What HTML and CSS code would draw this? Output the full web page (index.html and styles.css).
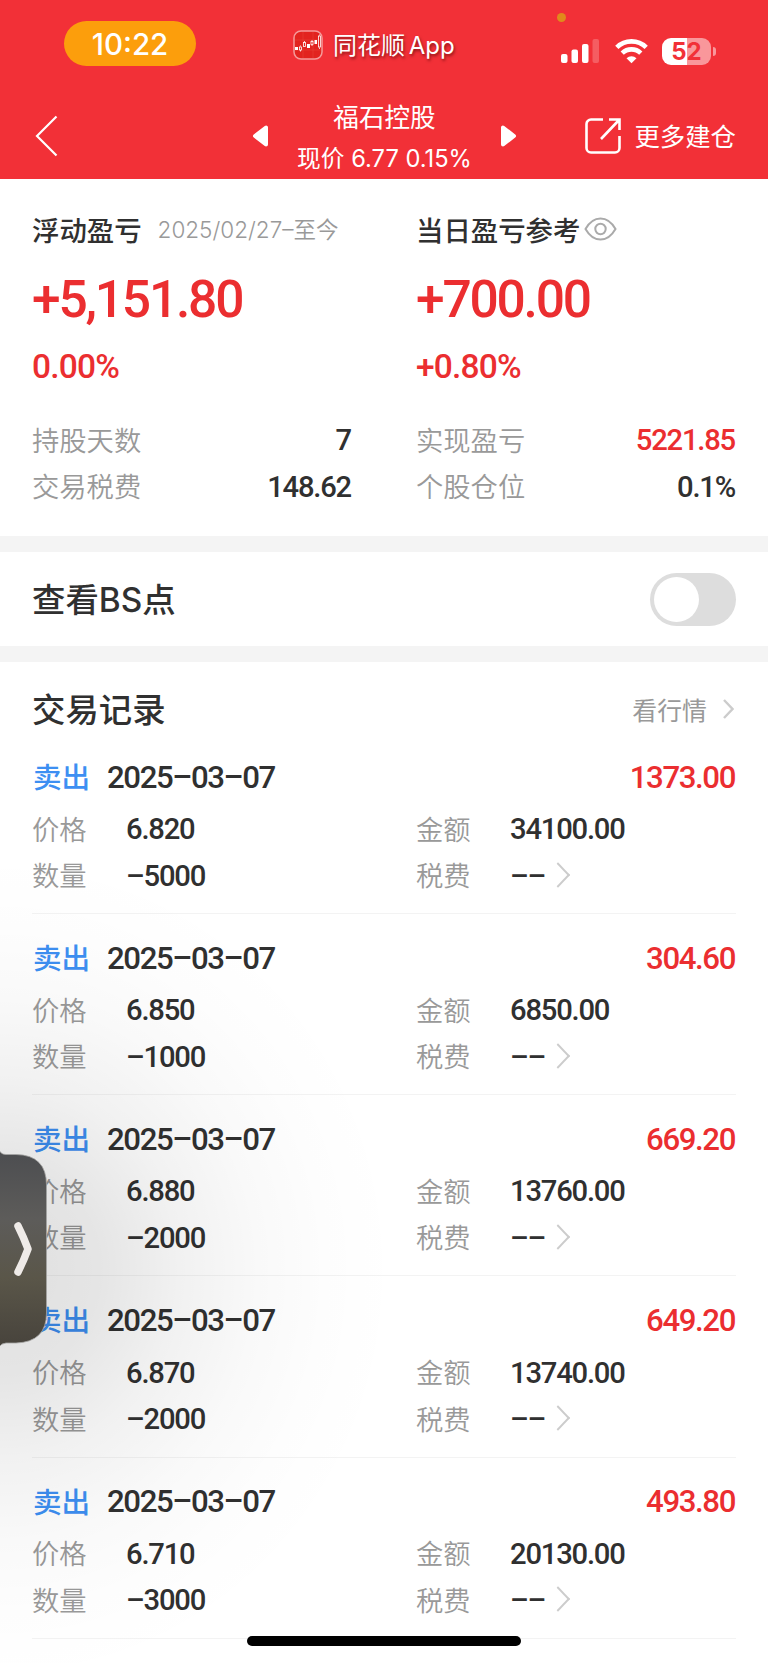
FILE: index.html
```
<!DOCTYPE html>
<html lang="zh-CN">
<head>
    <meta charset="UTF-8">
    <title>福石控股</title>
    <link rel="stylesheet" href="styles.css">
</head>
<body>
    <header class="header">
        <div class="status-bar">
            <span class="time">10:22</span>
            <div class="app-name">
                <svg class="app-icon" width="30" height="30" viewBox="0 0 30 30">
                    <rect x="1" y="1" width="28" height="28" rx="7" fill="#e2231f" stroke="#f59a9a" stroke-width="1.5"/>
                    <path d="M2 10h26M2 20h26M10 2v26M20 2v26" stroke="#ea4038" stroke-width=".6"/>
                    <g stroke="#fff" stroke-width=".8" fill="none">
                        <path d="M7.500 15.500v1M7.500 20v1.500M11.500 11v1.500M19 10v1.500M19 15v1M26.500 4.500v1M26.500 17.500v1.500"/>
                        <rect x="6.500" y="17" width="2" height="3"/>
                        <rect x="10.500" y="12.500" width="2" height="4"/>
                        <rect x="18" y="11.500" width="2" height="3"/>
                        <rect x="25.500" y="6" width="2" height="11"/>
                    </g>
                    <path d="M2 17h3v3H2zM14 14h3v4h-3zM21.500 10h2.500v4h-2.500z" fill="#fff"/>
                </svg>
                <span>同花顺 App</span>
            </div>
            <div class="indicators">
                <svg width="38" height="26" viewBox="0 0 38 26" fill="#fff">
                    <rect x="0" y="16" width="6.500" height="9" rx="2"/>
                    <rect x="10.500" y="11.500" width="6.500" height="13.500" rx="2"/>
                    <rect x="21" y="6" width="6.500" height="19" rx="2"/>
                    <rect x="31.500" y="1" width="6.500" height="24" rx="2" opacity=".22"/>
                </svg>
                <svg class="wifi" width="33" height="26" viewBox="0 0 33 26" fill="none" stroke="#fff" stroke-width="4.600">
                    <path d="M1.800 9.400a21 21 0 0 1 29.400 0"/>
                    <path d="M7.200 15.200a13.300 13.300 0 0 1 18.600 0"/>
                    <path d="M16.500 25.200l-5-5a7.200 7.200 0 0 1 10 0z" fill="#fff" stroke="none"/>
                </svg>
                <div class="battery"><span>52</span></div>
            </div>
            <i class="mic-dot"></i>
        </div>
        <nav class="nav-bar">
            <svg class="back" width="24" height="42" viewBox="0 0 24 42" fill="none" stroke="#fff" stroke-width="2.200">
                <path d="M21.500 1.500L2 21l19.500 19.500"/>
            </svg>
            <div class="stock">
                <svg width="17" height="24" viewBox="0 0 17 24" fill="#fff" stroke="#fff" stroke-width="4" stroke-linejoin="round">
                    <path d="M14 3.500v17L3 12z"/>
                </svg>
                <div class="stock-info">
                    <div class="stock-name">福石控股</div>
                    <div class="stock-price">现价 6.77 0.15%</div>
                </div>
                <svg width="17" height="24" viewBox="0 0 17 24" fill="#fff" stroke="#fff" stroke-width="4" stroke-linejoin="round">
                    <path d="M3 3.500v17L14 12z"/>
                </svg>
            </div>
            <a class="more">
                <svg width="38" height="38" viewBox="0 0 38 38" fill="none" stroke="#fff" stroke-width="2.600">
                    <path d="M19 2.500H7a4.500 4.500 0 0 0-4.500 4.500v24a4.500 4.500 0 0 0 4.500 4.500h24a4.500 4.500 0 0 0 4.500-4.500V19"/>
                    <path d="M25 2.500h10.500V13M35 3L17 22"/>
                </svg>
                <span>更多建仓</span>
            </a>
        </nav>
    </header>

    <section class="summary">
        <div class="summary-col">
            <div class="summary-title">浮动盈亏 <small>2025/02/27–至今</small></div>
            <div class="amount">+5,151.80</div>
            <div class="percent">0.00%</div>
            <div class="stat"><span>持股天数</span><b>7</b></div>
            <div class="stat"><span>交易税费</span><b>148.62</b></div>
        </div>
        <div class="summary-col">
            <div class="summary-title">当日盈亏参考
                <svg width="33" height="24" viewBox="0 0 33 24" fill="none" stroke="#aaa" stroke-width="2">
                    <path d="M1.500 12C5.500 5 10.500 1.500 16.500 1.500S27.500 5 31.500 12C27.500 19 22.500 22.500 16.500 22.500S5.500 19 1.500 12z"/>
                    <circle cx="16.500" cy="12" r="5.200"/>
                </svg>
            </div>
            <div class="amount">+700.00</div>
            <div class="percent">+0.80%</div>
            <div class="stat"><span>实现盈亏</span><b class="red">5221.85</b></div>
            <div class="stat"><span>个股仓位</span><b>0.1%</b></div>
        </div>
    </section>

    <section class="bs-row">
        <h2>查看BS点</h2>
        <div class="switch"></div>
    </section>

    <section class="records">
        <div class="records-head">
            <h2>交易记录</h2>
            <a>看行情
                <svg width="11" height="20" viewBox="0 0 11 20" fill="none" stroke="#ccc" stroke-width="2.400"><path d="M1 1l8.500 9L1 19"/></svg>
            </a>
        </div>

        <div class="record">
            <div class="record-title"><em>卖出</em><b>2025–03–07</b><b class="red">1373.00</b></div>
            <div class="record-row"><span>价格</span><b>6.820</b><span>金额</span><b>34100.00</b></div>
            <div class="record-row"><span>数量</span><b>–5000</b><span>税费</span><b class="fee">––</b></div>
        </div>
        <div class="record">
            <div class="record-title"><em>卖出</em><b>2025–03–07</b><b class="red">304.60</b></div>
            <div class="record-row"><span>价格</span><b>6.850</b><span>金额</span><b>6850.00</b></div>
            <div class="record-row"><span>数量</span><b>–1000</b><span>税费</span><b class="fee">––</b></div>
        </div>
        <div class="record">
            <div class="record-title"><em>卖出</em><b>2025–03–07</b><b class="red">669.20</b></div>
            <div class="record-row"><span>价格</span><b>6.880</b><span>金额</span><b>13760.00</b></div>
            <div class="record-row"><span>数量</span><b>–2000</b><span>税费</span><b class="fee">––</b></div>
        </div>
        <div class="record">
            <div class="record-title"><em>卖出</em><b>2025–03–07</b><b class="red">649.20</b></div>
            <div class="record-row"><span>价格</span><b>6.870</b><span>金额</span><b>13740.00</b></div>
            <div class="record-row"><span>数量</span><b>–2000</b><span>税费</span><b class="fee">––</b></div>
        </div>
        <div class="record">
            <div class="record-title"><em>卖出</em><b>2025–03–07</b><b class="red">493.80</b></div>
            <div class="record-row"><span>价格</span><b>6.710</b><span>金额</span><b>20130.00</b></div>
            <div class="record-row"><span>数量</span><b>–3000</b><span>税费</span><b class="fee">––</b></div>
        </div>
    </section>

    <!-- floating drawer handle -->
    <div class="drawer-shadow"></div>
    <svg class="drawer" width="48" height="200" viewBox="0 0 48 200">
        <defs>
            <linearGradient id="drawer-fill" x1="0" y1="0" x2="0" y2="1">
                <stop offset="0" stop-color="#4c4d50"/>
                <stop offset=".35" stop-color="#5d5c5a"/>
                <stop offset=".65" stop-color="#5a5649"/>
                <stop offset="1" stop-color="#47433c"/>
            </linearGradient>
        </defs>
        <path d="M-1 1Q1 5.500 6 5.500H16Q46.500 6 46.500 36V164Q46.500 193 16 194H6Q1 194.500-1 198z" fill="url(#drawer-fill)" stroke="#a5a5a3" stroke-width=".8"/>
        <path d="M18 77Q24 89 28 100Q24 111 18 123" fill="none" stroke="#efebe8" stroke-width="7.500" stroke-linecap="round" stroke-linejoin="round"/>
    </svg>
    <div class="home-bar"></div>
</body>
</html>
```
FILE: styles.css
```
* {
    box-sizing: border-box;
}
body {
    position: relative;
    width: 768px;
    height: 1663px;
    margin: 0;
    overflow: hidden;
    background-color: #fff;
    color: #303030;
    font-family: Inter, "Noto Sans CJK SC", sans-serif;
}
svg {
    display: block;
    flex: none;
}
b, em, h2 {
    margin: 0;
    font-style: normal;
    font-weight: 500;
}
b, .amount, .percent {
    font-family: Roboto, "Noto Sans CJK SC", sans-serif;
    white-space: nowrap;
}
.red {
    color: #eb2e30;
}

/* header */
.header {
    height: 179px;
    background-color: #f23037;
    color: #fff;
}
.status-bar {
    position: relative;
    display: flex;
    height: 88px;
    padding-left: 64px;
}
.time {
    width: 132px;
    height: 45px;
    margin-top: 21px;
    border-radius: 23px;
    background-color: #fc9e0c;
    font-size: 29.500px;
    font-weight: 500;
    line-height: 46px;
    text-align: center;
}
.app-name {
    display: flex;
    align-items: center;
    gap: 10px;
    width: 268px;
    height: 30px;
    margin: 30px 0 0 97px;
    font-size: 24px;
    white-space: nowrap;
    word-spacing: -3px;
    text-shadow: 1px 2px 3px rgba(70, 0, 0, 0.6);
}
.app-name span {
    padding-bottom: 4px;
}
.indicators {
    display: flex;
    align-items: center;
    height: 28px;
    margin-top: 37px;
}
.wifi {
    margin: 0 14px 0 16px;
}
.battery {
    position: relative;
    width: 49px;
    height: 27px;
    border-radius: 9px;
    background: linear-gradient(90deg, #fff 52%, #f9979b 52%);
    color: #f23037;
    font-size: 24px;
    font-weight: 700;
    line-height: 27px;
    text-align: center;
}
.battery::after {
    content: "";
    position: absolute;
    top: 9px;
    right: -5px;
    width: 3px;
    height: 9px;
    border-radius: 0 4px 4px 0;
    background-color: #f9979b;
}
.mic-dot {
    position: absolute;
    top: 13px;
    left: 557px;
    width: 9px;
    height: 9px;
    border-radius: 50%;
    background-color: #e08a1c;
}
.nav-bar {
    display: flex;
    align-items: center;
    height: 91px;
    padding: 5px 32px 0 35px;
}
.stock {
    display: flex;
    align-items: center;
    margin-left: 193px;
    width: 265px;
}
.stock-info {
    width: 231px;
    text-align: center;
    white-space: nowrap;
}
.stock-name {
    margin-top: 3px;
    font-size: 25.600px;
    line-height: 41px;
}
.stock-price {
    font-size: 23.700px;
    line-height: 41px;
}
.more {
    display: flex;
    align-items: center;
    gap: 12px;
    margin-left: auto;
    font-size: 25.400px;
    white-space: nowrap;
}
.more span {
    padding-bottom: 2px;
}

/* profit summary */
.summary {
    display: grid;
    grid-template-columns: 320px 320px;
    column-gap: 64px;
    height: 357px;
    padding: 30px 32px 0;
}
.summary-title {
    display: flex;
    align-items: center;
    height: 40px;
    font-size: 27.400px;
    font-weight: 500;
    white-space: nowrap;
}
.summary-title small {
    margin-left: 16px;
    padding-bottom: 2px;
    color: #999;
    font-size: 22.500px;
    font-weight: 350;
}
.summary-title svg {
    margin-left: 4px;
}
.amount {
    margin-top: 21px;
    color: #eb2e30;
    font-size: 51.500px;
    font-weight: 500;
    letter-spacing: -2.200px;
    line-height: 60px;
}
.percent {
    margin: 17px 0 30px;
    color: #eb2e30;
    font-size: 33.500px;
    font-weight: 500;
    letter-spacing: -0.800px;
    line-height: 40px;
}
.stat {
    display: flex;
    align-items: center;
    justify-content: space-between;
    height: 46.500px;
}
.stat span, .record-row span {
    color: #999;
    font-size: 27.300px;
    font-weight: 350;
}
.stat b, .record-row b {
    font-size: 29.200px;
    letter-spacing: -1.200px;
}
.stat b {
    margin-right: 1px;
}

/* BS switch */
.bs-row {
    display: flex;
    align-items: center;
    justify-content: space-between;
    height: 126px;
    padding: 0 32px;
    border: solid #f4f4f4;
    border-width: 16px 0;
}
h2 {
    padding-bottom: 4px;
    font-size: 33.400px;
}
.switch {
    width: 86px;
    height: 53px;
    padding: 4px;
    border-radius: 27px;
    background-color: #ddd;
}
.switch::before {
    content: "";
    display: block;
    width: 45px;
    height: 45px;
    border-radius: 50%;
    background-color: #fff;
}

/* trade records */
.records {
    padding: 0 32px;
}
.records-head {
    display: flex;
    align-items: center;
    justify-content: space-between;
    height: 90px;
    padding-top: 4px;
}
.records-head a {
    display: flex;
    align-items: center;
    gap: 16px;
    padding-right: 2px;
    color: #999;
    font-size: 24.900px;
}
.record {
    height: 181.200px;
    border-bottom: 1.500px solid #f3f3f3;
}
.record:not(:nth-child(2)) {
    padding-top: 19px;
}
.record:nth-child(2) {
    height: 162px;
}
.record-title {
    display: flex;
    align-items: center;
    height: 50px;
    margin-bottom: 4px;
    font-size: 31.200px;
}
.record-title em {
    width: 75px;
    padding: 0 0 3px 1px;
    color: #3d8ff2;
    font-size: 28.600px;
}
.record-title b {
    letter-spacing: -1.400px;
}
.record-title .red {
    margin: 0 1px 0 auto;
}
.record-row {
    display: grid;
    grid-template-columns: 94px 290px 94px 1fr;
    align-items: center;
    height: 46.500px;
}
.record-row span, .stat span {
    padding-bottom: 3px;
}
/* chevron after the fee value */
.fee::after {
    content: "";
    display: inline-block;
    width: 16px;
    height: 16px;
    margin-left: 4px;
    border: solid #ccc;
    border-width: 2.500px 2.500px 0 0;
    transform: translateY(-2px) scaleX(0.95) rotate(45deg);
}

/* overlays */
.drawer-shadow {
    position: absolute;
    top: 840px;
    left: 0;
    width: 440px;
    height: 823px;
    background: radial-gradient(400px 420px at 0 430px, rgba(0, 0, 0, 0.125), rgba(0, 0, 0, 0.1) 25%, rgba(0, 0, 0, 0.055) 45%, rgba(0, 0, 0, 0.022) 65%, rgba(0, 0, 0, 0.008) 82%, transparent);
}
.drawer {
    position: absolute;
    top: 1149px;
    left: 0;
}
.home-bar {
    position: absolute;
    top: 1636px;
    left: 247px;
    width: 274px;
    height: 10px;
    border-radius: 5px;
    background-color: #000;
}
```
